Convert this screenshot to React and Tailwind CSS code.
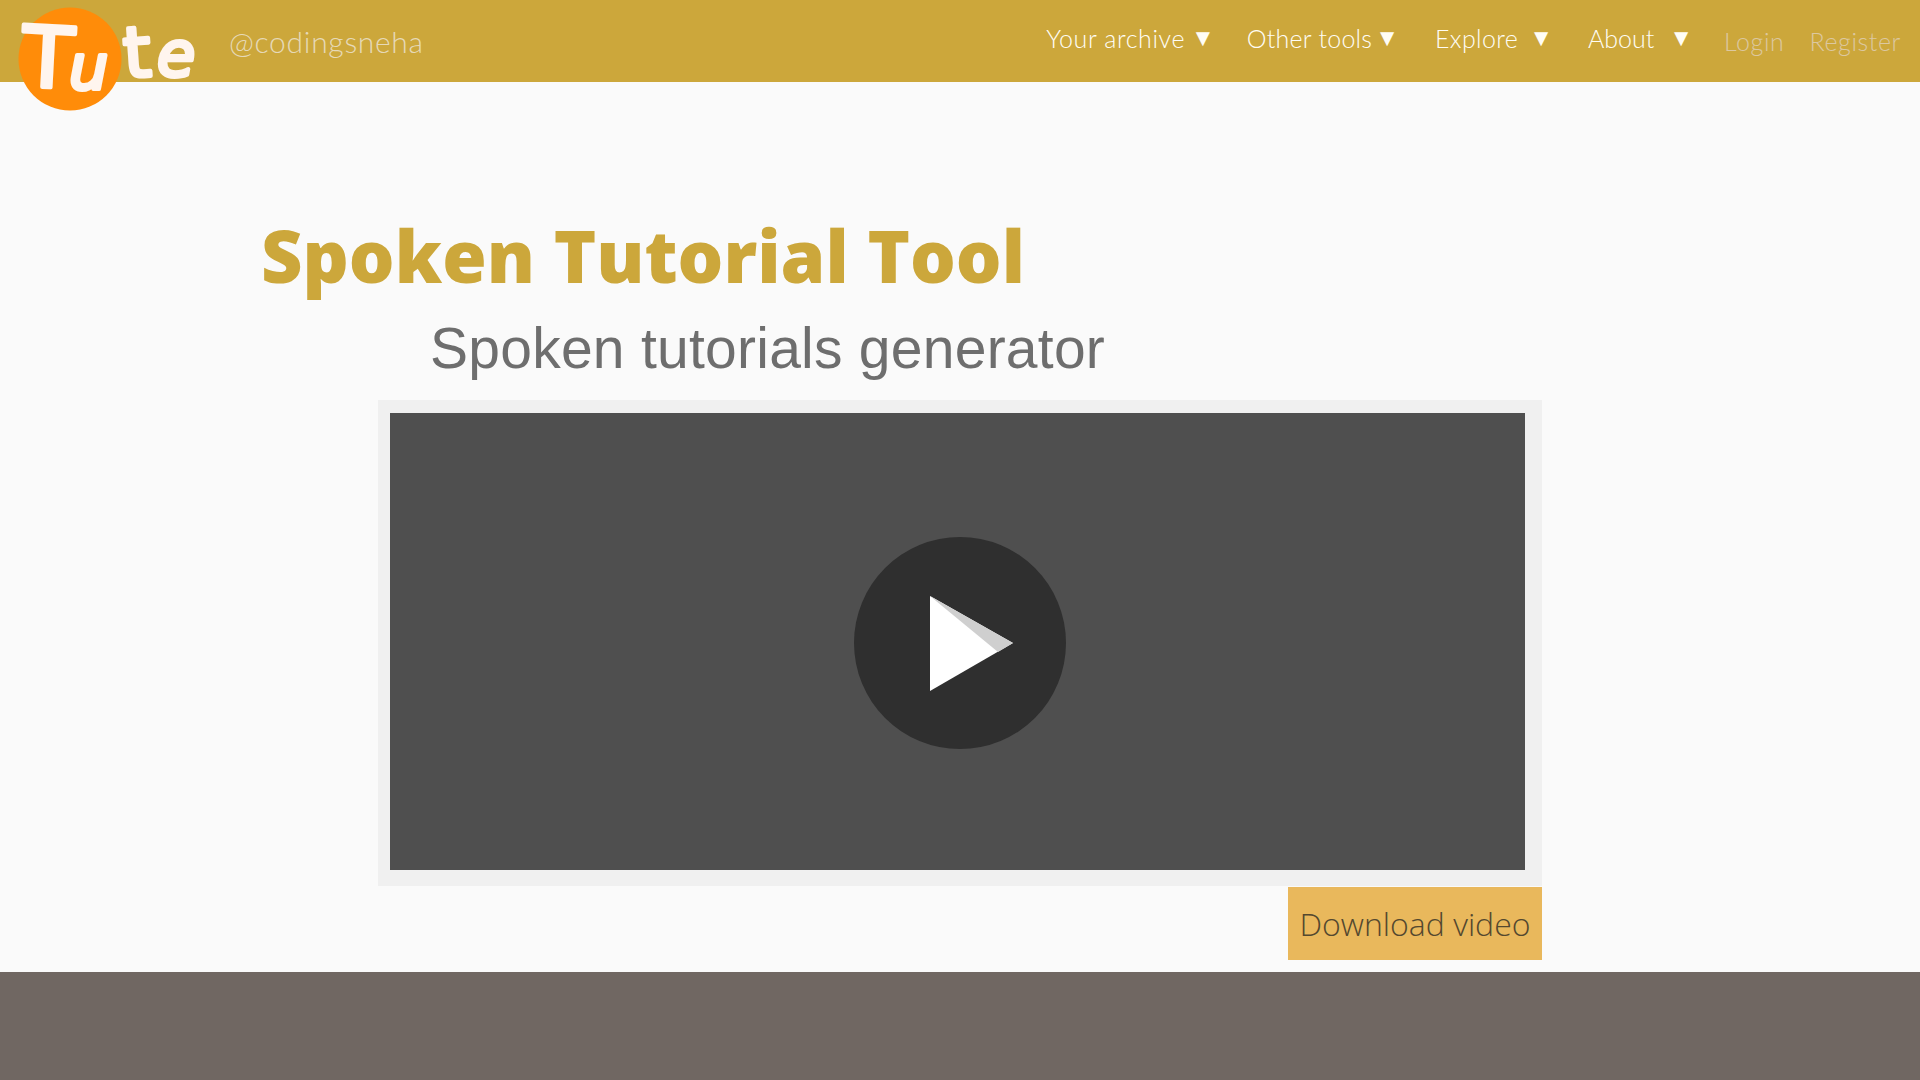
import React from "react";

const sans = "font-['Lato','Noto_Sans',sans-serif]";

function Logo() {
  return (
    <svg className="absolute left-[15px] top-[3px] z-10" width="190" height="112" viewBox="0 0 190 112" aria-label="Tute logo">
      <circle cx="55" cy="56" r="51.5" fill="#ff8c09" />
      <g fill="#fff5ee" stroke="#fff5ee" strokeWidth="4" strokeLinejoin="round" fontFamily="'DejaVu Sans', sans-serif">
        <text x="7" y="84" fontSize="84" transform="rotate(3 30 60)">T</text>
        <text x="54" y="86" fontSize="62" fontStyle="italic">u</text>
        <text x="109" y="74" fontSize="70" transform="rotate(-4 120 60)">t</text>
        <text x="142" y="73" fontSize="62" fontStyle="italic">e</text>
      </g>
    </svg>
  );
}

function NavItem({ label, caret, className }) {
  return (
    <span className={`flex items-center text-[25px] leading-none font-light text-[#fffdf5] ${className}`}>
      <span>{label}</span>
      <span className={`font-['DejaVu_Sans',sans-serif] text-[24px] tracking-normal ${caret}`}>▼</span>
    </span>
  );
}

export default function App() {
  return (
    <div className={`flex min-h-screen flex-col bg-[#fafafa] ${sans}`}>
      <header className="relative flex h-[82px] items-center bg-[#cca73b] pr-[19px]">
        <Logo />
        <span className="ml-[229px] text-[30px] font-light tracking-[0.7px] text-[#e6d9b8]">@codingsneha</span>
        <nav className="ml-auto flex items-center">
          <NavItem label="Your archive" caret="ml-[6px]" className="mb-[6px] tracking-[0.6px]" />
          <NavItem label="Other tools" caret="ml-[3px]" className="mb-[6px] ml-[32px] tracking-[0.25px]" />
          <NavItem label="Explore" caret="ml-[11px]" className="mb-[6px] ml-[36px] tracking-[0.35px]" />
          <NavItem label="About" caret="ml-[15px]" className="mb-[6px] ml-[35px] tracking-normal" />
          <span className="ml-[31px] mt-[2px] text-[25px] font-light tracking-[0.6px] text-[#dcc8a0]">Login</span>
          <span className="ml-[25px] mt-[2px] text-[25px] font-light tracking-[0.6px] text-[#dcc8a0]">Register</span>
        </nav>
      </header>

      <main className="flex flex-1 flex-col">
        <h1 className="ml-[261px] mt-[124px] font-['Open_Sans',sans-serif] text-[72px] leading-[98px] font-extrabold text-[#cca73b]">
          Spoken Tutorial Tool
        </h1>
        <p className="ml-[430px] mt-[12px] font-['Liberation_Sans',sans-serif] text-[57px] leading-[64px] tracking-[0.25px] text-[#6e6e6e]">
          Spoken tutorials generator
        </p>
        <section className="ml-[378px] mt-[20px] w-[1164px] bg-[#f0f0f0] pl-[12px] pr-[17px] pt-[13px] pb-[16px]">
          <div className="flex h-[457px] items-center justify-center bg-[#4f4f4f]">
            <svg className="ml-[4px] mt-[2px]" width="212" height="212" viewBox="0 0 212 212" aria-label="Play">
              <circle cx="106" cy="106" r="106" fill="#2f2f2f" />
              <polygon points="76,59 159,106 76,154" fill="#fff" />
              <polygon points="76,59 159,106 144,115" fill="#cfcfcf" />
            </svg>
          </div>
        </section>
        <div className="mb-[12px] mr-[378px] mt-[1px] flex justify-end">
          <button className="flex h-[73px] w-[254px] items-center justify-center bg-[#e9b85c] font-['Open_Sans',sans-serif] text-[32px] font-light text-[#54482f]">
            Download video
          </button>
        </div>
      </main>

      <footer className="h-[108px] bg-[#706762]" />
    </div>
  );
}
